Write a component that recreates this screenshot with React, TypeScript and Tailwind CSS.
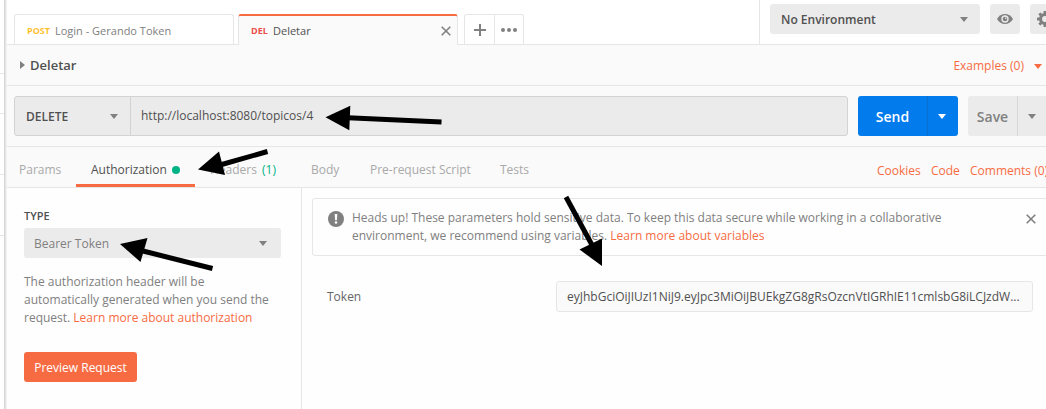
import React from "react";

function Caret({ className = "" }: { className?: string }) {
  return (
    <svg className={"shrink-0 " + className} width="8" height="5" viewBox="0 0 8 5" fill="currentColor">
      <path d="M0 0h8L4 5z" />
    </svg>
  );
}

function Cross() {
  return (
    <svg className="shrink-0" width="10" height="10" viewBox="0 0 10 10" stroke="currentColor" strokeWidth="1.6">
      <path d="M.7.7l8.6 8.6M9.3.7L.7 9.3" />
    </svg>
  );
}

function Eye() {
  return (
    <svg width="16" height="10" viewBox="0 0 16 10">
      <path d="M0 5C2 1.8 4.8 0 8 0s6 1.8 8 5c-2 3.200-4.800 5-8 5S2 8.200 0 5z" fill="#808080" />
      <circle cx="8" cy="5" r="3.700" fill="#ebebeb" />
      <circle cx="8" cy="5" r="2.300" fill="#808080" />
      <circle cx="8.700" cy="4.300" r=".8" fill="#ebebeb" />
    </svg>
  );
}

function Gear() {
  return (
    <svg className="shrink-0" width="16" height="16" viewBox="0 0 16 16">
      <g fill="#808080">
        <circle cx="8" cy="8" r="6" />
        {[0, 45, 90, 135].map((a) => (
          <rect key={a} x="6.500" y="0" width="3" height="16" rx=".5" transform={`rotate(${a} 8 8)`} />
        ))}
      </g>
      <circle cx="8" cy="8" r="2.900" fill="#ebebeb" />
    </svg>
  );
}

function TopBar() {
  return (
    <header className="flex h-[45px] shrink-0 border-b border-[#e6e6e6] bg-white">
      <div className="ml-[7px] mt-[14px] flex h-[31px] items-start">
        <div className="flex h-[30px] w-[220px] items-center rounded-t-[3px] border border-b-0 border-[#e6e6e6] pl-3 pt-[3px]">
          <span className="w-[28px] text-[9px] font-bold text-[#ffb400]/85">POST</span>
          <span className="text-[11px] text-[#808080]">Login - Gerando Token</span>
        </div>
        <div className="ml-1 flex h-[31px] w-[220px] items-center rounded-t-[3px] border-x border-t-2 border-x-[#e6e6e6] border-t-[#f76b43] bg-[#fafafa] pl-3 pr-[6px]">
          <span className="w-[22px] text-[9px] font-bold text-[#ed4b48]">DEL</span>
          <span className="flex-1 pt-[2px] text-[11px] text-[#505050]">Deletar</span>
          <span className="text-[#808080]"><Cross /></span>
        </div>
        <div className="ml-[6px] flex h-[30px] w-[60px] rounded-t-[3px] border border-b-0 border-[#e6e6e6] text-[#808080]">
          <div className="flex w-[30px] items-center justify-center border-r border-[#e6e6e6] pl-px">
            <svg width="12" height="12" viewBox="0 0 12 12" fill="currentColor"><path d="M5 0h2v5h5v2H7v5H5V7H0V5h5z" /></svg>
          </div>
          <div className="flex flex-1 items-center justify-center">
            <svg width="16" height="4" viewBox="0 0 16 4" fill="currentColor"><circle cx="2" cy="2" r="2" /><circle cx="8" cy="2" r="2" /><circle cx="14" cy="2" r="2" /></svg>
          </div>
        </div>
      </div>
      <div className="ml-auto flex w-[287px] shrink-0 overflow-hidden border-l border-[#e6e6e6] pl-[10px] pt-1">
        <div className="flex h-[30px] w-[210px] shrink-0 items-center justify-between rounded-[3px] bg-[#ebebeb] pl-[11px] pr-3 text-[12px] font-semibold text-[#505050]">
          <span className="pt-[2px]">No Environment</span> <Caret className="text-[#808080]" />
        </div>
        <div className="ml-[10px] flex h-[30px] w-[30px] shrink-0 items-center justify-center rounded-[3px] bg-[#ebebeb]"><Eye /></div>
        <div className="ml-[10px] flex h-[30px] w-[30px] shrink-0 items-center justify-center rounded-[3px] bg-[#ebebeb]"><Gear /></div>
      </div>
    </header>
  );
}

function RequestLine() {
  return (
    <div className="flex h-[61px] shrink-0 items-start overflow-hidden border-b border-[#e6e6e6] pl-[7px] pt-[10px]">
      <div className="flex h-[40px] w-[834px] shrink-0 rounded-[3px] border border-[#d3d3d3] bg-[#ebebeb] text-[12px] text-[#505050]">
        <div className="flex w-[116px] items-center justify-between border-r border-[#d3d3d3] pl-[11px] pr-3 font-semibold">
          <span className="pt-[2px]">DELETE</span> <Caret className="mt-px text-[#808080]" />
        </div>
        <div className="flex items-center pl-[10px]">http://localhost:8080/topicos/4</div>
      </div>
      <div className="ml-[10px] flex h-[40px] w-[100px] shrink-0 rounded-[3px] bg-[#027bed] text-white">
        <div className="flex w-[70px] items-center justify-center border-r border-[#0a6fd0] text-[14px] font-semibold">Send</div>
        <div className="flex flex-1 items-center justify-center pr-[2px]"><Caret /></div>
      </div>
      <div className="ml-[10px] flex h-[40px] w-[80px] shrink-0 rounded-[3px] bg-[#ebebeb] text-[#808080]">
        <div className="flex w-[50px] items-center justify-center border-r border-[#d8d8d8] text-[14px] font-semibold">Save</div>
        <div className="flex flex-1 items-center justify-center pr-[2px]"><Caret /></div>
      </div>
    </div>
  );
}

function RequestTabs() {
  return (
    <nav className="flex h-[41px] shrink-0 overflow-hidden whitespace-nowrap border-b border-[#e6e6e6] pl-3 text-[12px] text-[#a9a9a9]">
      <div className="flex w-[57px] items-center pt-[5px]">Params</div>
      <div className="flex w-[119px] items-center border-b-[3px] border-[#f76b43] pl-[15px] pt-2 text-[#505050]">
        <span className="w-[81px]">Authorization</span>
        <span className="h-2 w-2 rounded-full bg-[#00b386]" />
      </div>
      <div className="flex w-[116px] items-center pl-[15px] pt-[5px]">
        <span className="w-[52px]">Headers</span><span className="text-[#00b386]">(1)</span>
      </div>
      <div className="flex w-[59px] items-center pt-[5px]">Body</div>
      <div className="flex w-[130px] items-center pt-[5px]">Pre-request Script</div>
      <div className="flex items-center pt-[5px]">Tests</div>
      <div className="ml-auto flex w-[169px] shrink-0 items-center pt-[7px] text-[#f76b43]">
        <span className="w-[54px] shrink-0">Cookies</span>
        <span className="w-[39px] shrink-0">Code</span>
        <span>Comments (0)</span>
      </div>
    </nav>
  );
}

function AuthType() {
  return (
    <aside className="w-[295px] shrink-0 border-r border-[#e6e6e6] pl-[17px] pt-[20px] text-[12px]">
      <h2 className="h-5 text-[11px] font-semibold leading-4 text-[#505050]">TYPE</h2>
      <div className="flex h-[30px] w-[257px] items-center justify-between rounded-[3px] bg-[#ebebeb] pl-[10px] pr-[14px] text-[#808080]">
        <span className="pt-px">Bearer Token</span> <Caret />
      </div>
      <p className="mt-[15px] w-[257px] leading-[18px] text-[#808080]">
        The authorization header will be<br />automatically generated when you send the<br />request.{" "}
        <span className="text-[#f76b43]">Learn more about authorization</span>
      </p>
      <button className="mt-[25px] h-[30px] w-[113px] rounded-[3px] bg-[#f76b43] pt-px text-white">Preview Request</button>
    </aside>
  );
}

function AuthDetails() {
  return (
    <section className="flex-1 overflow-hidden pl-[10px] pt-[10px] text-[12px]">
      <div className="flex h-[58px] w-[750px] rounded-[3px] border border-[#e6e6e6] pl-[15px] pt-[10px] text-[#808080]">
        <svg className="mt-[2px] shrink-0" width="16" height="16" viewBox="0 0 16 16">
          <circle cx="8" cy="8" r="8" fill="#808080" />
          <path d="M6.700 3h2.600l-.4 6.200H7.100z" fill="white" /><circle cx="8" cy="11.500" r="1.300" fill="white" />
        </svg>
        <p className="ml-2 w-[674px] shrink-0 whitespace-nowrap leading-[18px]">
          Heads up! These parameters hold sensitive data. To keep this data secure while working in a collaborative<br />
          environment, we recommend using variables. <span className="text-[#f76b43]">Learn more about variables</span>
        </p>
        <span className="mt-[5px]"><Cross /></span>
      </div>
      <div className="mt-[25px] flex h-[31px] items-center pl-[15px] text-[#505050]">
        <span className="w-[229px] text-[#666]">Token</span>
        <div className="flex h-[31px] w-[477px] items-center whitespace-nowrap rounded-[3px] border border-[#e6e6e6] bg-[#fafafa] pl-[10px]">
          eyJhbGciOiJIUzI1NiJ9.eyJpc3MiOiJBUEkgZG8gRsOzcnVtIGRhIE11cmlsbG8iLCJzdW...
        </div>
      </div>
    </section>
  );
}

function Annotations() {
  return (
    <svg className="pointer-events-none absolute left-0 top-0" width="1046" height="409" viewBox="0 0 1046 409">
      <g stroke="black" strokeWidth="5">
        <path d="M348 117.700L441.500 122" />
        <path d="M220 165L267.500 151.500" />
        <path d="M143 251L212.500 268.500" />
        <path d="M566 197L592 245" />
      </g>
      <path d="M325.500 117.200L350.300 105.800L349.300 130.300z" />
      <path d="M198 169.500L219 151.500L225 175z" />
      <path d="M120 244L147.500 238L140.500 262z" />
      <path d="M602 266L579.500 249.500L602 238.500z" />
    </svg>
  );
}

export default function App() {
  return (
    <div className="relative flex h-[409px] w-[1046px] overflow-hidden bg-white font-['Open_Sans',sans-serif]">
      <div className="flex w-1 shrink-0 flex-col">
        <i className="h-[74px] border-b border-[#e6e6e6]" />
        <i className="h-[40px] border-b border-[#e6e6e6]" />
        <i className="h-[61px] border-b border-[#e6e6e6]" />
        <i className="h-[61px] border-b border-[#e6e6e6]" />
      </div>
      <div className="w-[3px] shrink-0 bg-linear-to-r from-[#cfcfcf] to-[#fafafa]" />
      <main className="flex min-w-0 flex-1 flex-col bg-[#fafafa]">
        <TopBar />
        <div className="flex h-[41px] shrink-0 items-center border-b border-[#e6e6e6] pl-[13px] pr-1">
          <svg width="5" height="8" viewBox="0 0 5 8" fill="#808080"><path d="M0 0l5 4-5 4z" /></svg>
          <h1 className="ml-[5px] pt-[2px] text-[13px] font-semibold text-[#505050]">Deletar</h1>
          <span className="ml-auto pt-[2px] text-[12px] text-[#f76b43]">Examples (0)</span>
          <Caret className="ml-[10px] mt-[2px] text-[#f76b43]" />
        </div>
        <RequestLine />
        <RequestTabs />
        <div className="flex flex-1 bg-[#fefefe]">
          <AuthType />
          <AuthDetails />
        </div>
      </main>
      <Annotations />
    </div>
  );
}
